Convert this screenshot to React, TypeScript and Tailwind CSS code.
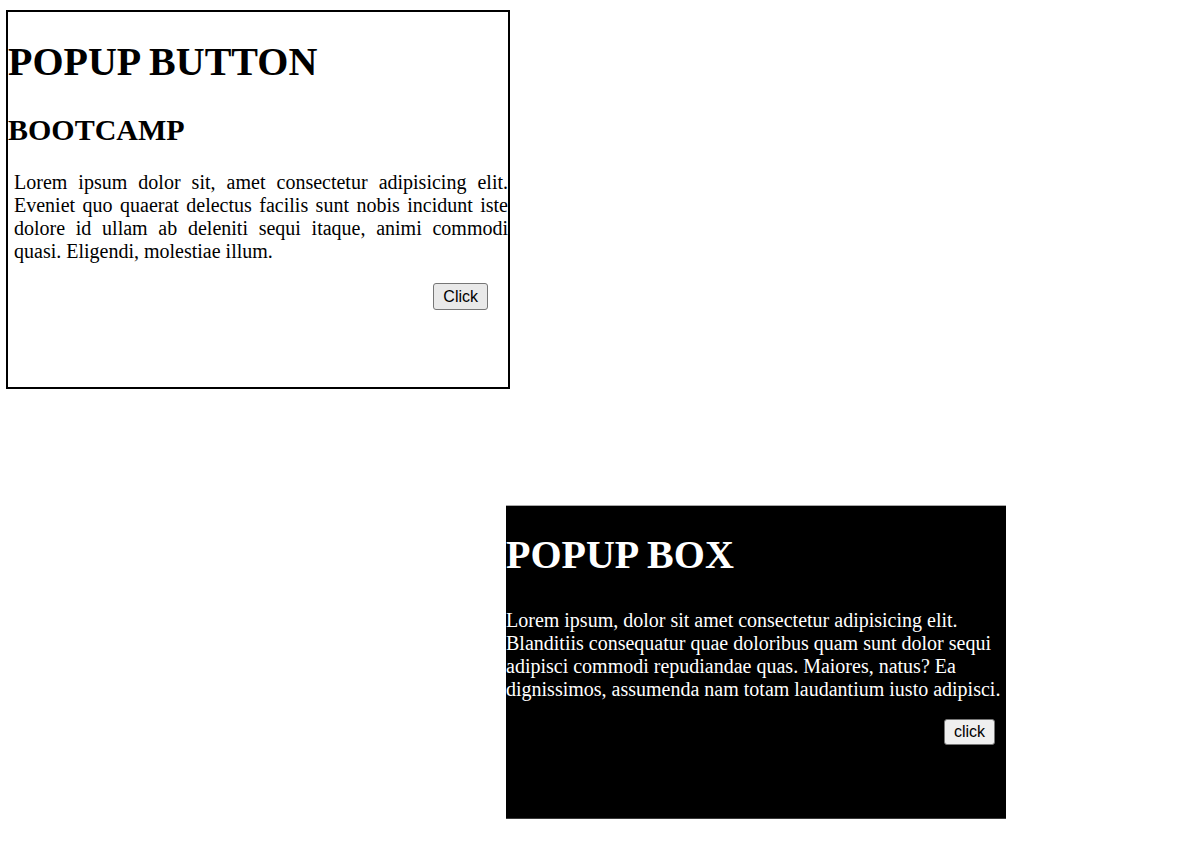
export default function App() {
    return (
        <div className="pt-[10px] pl-[6px] pb-[26px] font-['Liberation_Serif',serif] text-black bg-white">
            {/* first card: bordered */}
            <div className="w-[504px] h-[379px] border-2 border-black overflow-hidden">
                <h1 className="mt-[27px] text-[40px] leading-[46px] font-bold">POPUP BUTTON</h1>
                <h2 className="mt-[28px] text-[30px] leading-[34px] font-bold">BOOTCAMP</h2>
                <p className="mt-[24px] ml-[6px] text-[20px] leading-[23px] text-justify">
                    Lorem ipsum dolor sit, amet consectetur adipisicing elit. Eveniet quo quaerat delectus facilis sunt nobis incidunt iste dolore id ullam ab deleniti sequi itaque, animi commodi quasi. Eligendi, molestiae illum.
                </p>
                <div className="mt-[20px] flex justify-end pr-[20px]">
                    <button className="h-[27px] px-[9px] bg-[#e9e9e9] border border-[#767676] rounded-[3px] font-['Liberation_Sans',sans-serif] text-[16px] leading-none text-black">
                        Click
                    </button>
                </div>
            </div>

            {/* second card: dark popup */}
            <div className="ml-[500px] mt-[116px] w-[500px] h-[314px] bg-black text-white overflow-hidden border-t border-t-[#a8a8a8] border-b border-b-[#3a3a3a]">
                <h1 className="mt-[26px] text-[40px] leading-[46px] font-bold">POPUP BOX</h1>
                <p className="mt-[31px] text-[20px] leading-[23px]">
                    Lorem ipsum, dolor sit amet consectetur adipisicing elit. Blanditiis consequatur quae doloribus quam sunt dolor sequi adipisci commodi repudiandae quas. Maiores, natus? Ea dignissimos, assumenda nam totam laudantium iusto adipisci.
                </p>
                <div className="mt-[18px] flex justify-end pr-[11px]">
                    <button className="h-[26px] px-[9px] bg-[#efefef] border border-[#767676] rounded-[3px] font-['Liberation_Sans',sans-serif] text-[16px] leading-none text-black">
                        click
                    </button>
                </div>
            </div>
        </div>
    );
}
